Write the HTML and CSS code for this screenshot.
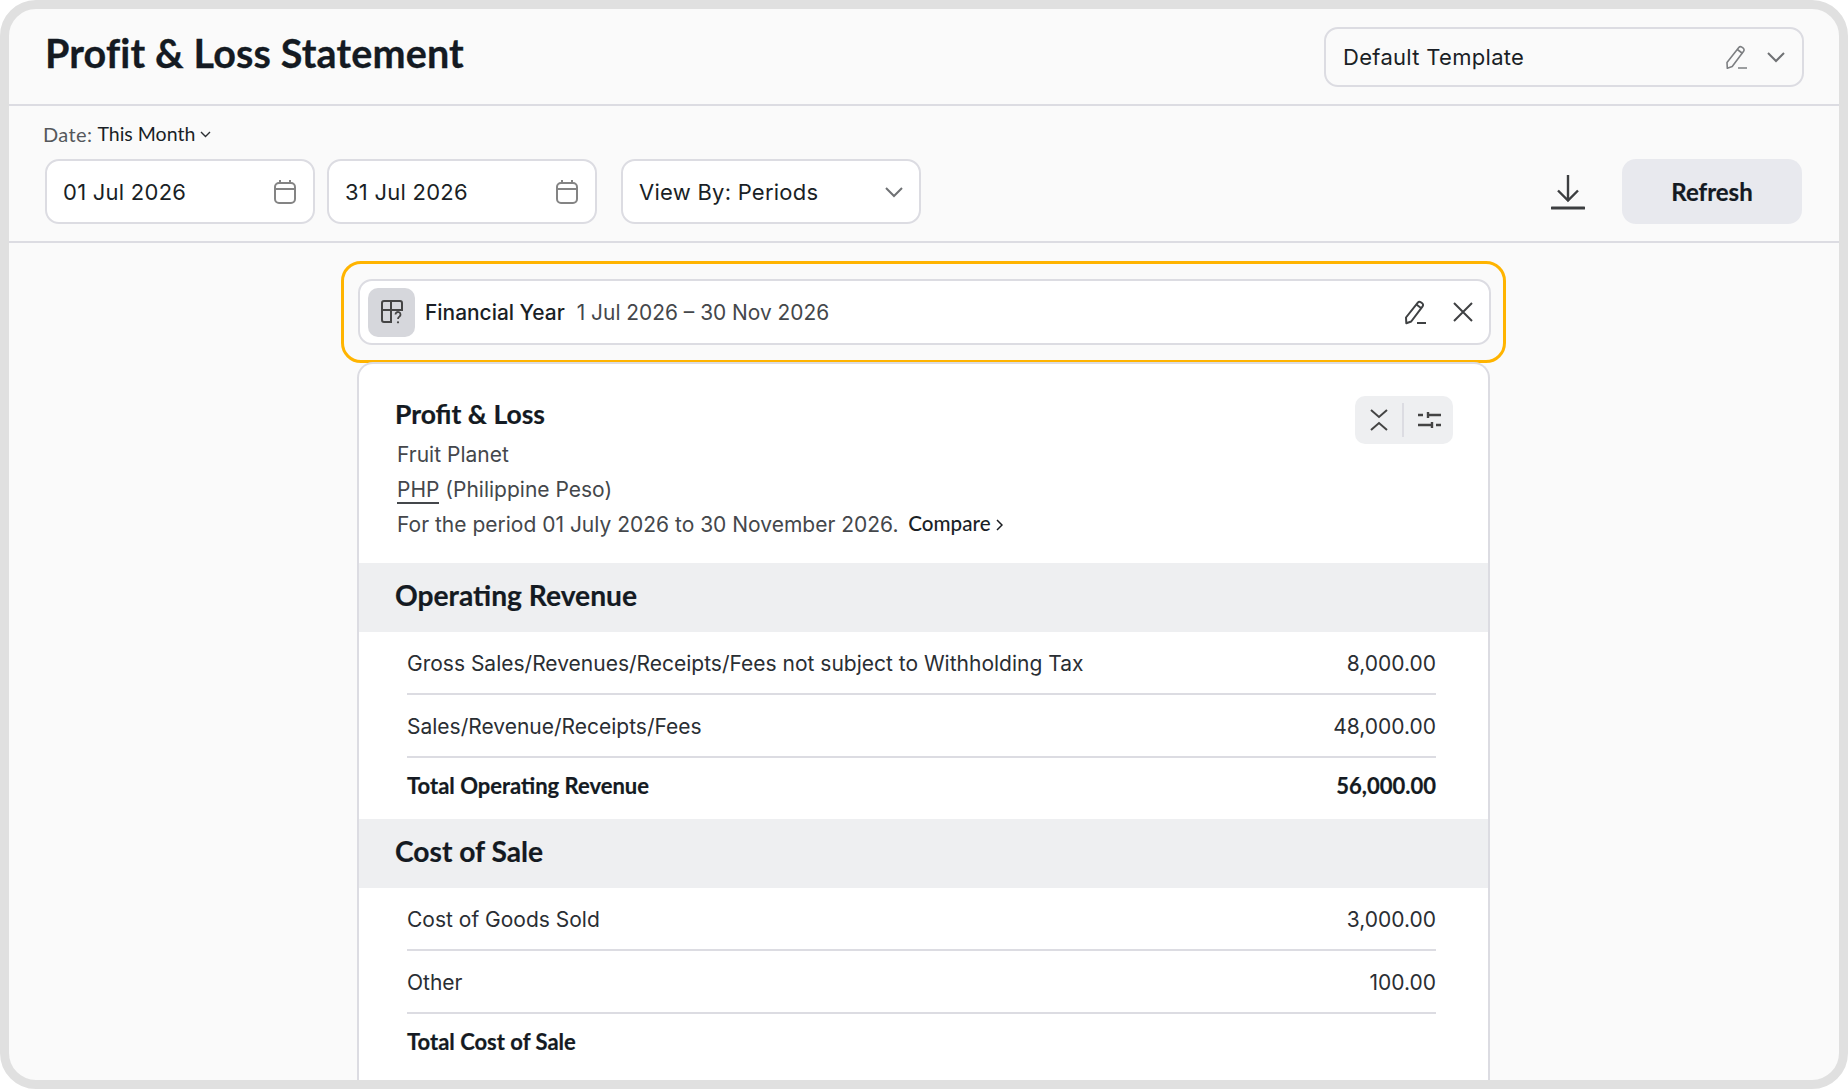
FILE: index.html
```html
<!DOCTYPE html>
<html lang="en">
<head>
    <meta charset="UTF-8">
    <meta name="viewport" content="width=device-width, initial-scale=1.0">
    <title>Profit &amp; Loss Statement</title>
    <link rel="stylesheet" href="styles.css">
</head>
<body>

    <div class="frame">
        <div class="header">
            <h1>Profit &amp; Loss Statement</h1>
            <div class="template-select">
                <span>Default Template</span>
                <svg class="icon-pen" width="26" height="26" viewBox="0 0 26 26" fill="none" stroke="#7d7f82" stroke-width="1.6" stroke-linejoin="round"><path d="M3 18.5 14.8 3.6a2.2 2.2 0 0 1 3-.4l1.4 1a2.2 2.2 0 0 1 .4 3.1L8.200 22.500 3.300 24.200z"/><path d="M13.400 5.500l5.200 4"/><path d="M14 24h9"/></svg>
                <svg class="icon-chev" width="20" height="12" viewBox="0 0 20 12" fill="none" stroke="#6f7174" stroke-width="2"><path d="M2 2l8 8 8-8"/></svg>
            </div>
        </div>

        <div class="toolbar">
            <div class="date-label">Date: <span class="date-value">This Month</span>
                <svg width="11" height="7" viewBox="0 0 11 7" fill="none" stroke="#2b2f33" stroke-width="1.400"><path d="M1 1l4.500 4.500L10 1"/></svg>
            </div>
            <div class="toolbar-row">
                <div class="field date-field">
                    <span>01 Jul 2026</span>
                    <svg width="24" height="26" viewBox="0 0 24 26" fill="none" stroke="#848484" stroke-width="2"><rect x="2" y="4" width="20" height="20" rx="4"/><path d="M2 10h20M7 1v4M17 1v4"/></svg>
                </div>
                <div class="field date-field">
                    <span>31 Jul 2026</span>
                    <svg width="24" height="26" viewBox="0 0 24 26" fill="none" stroke="#848484" stroke-width="2"><rect x="2" y="4" width="20" height="20" rx="4"/><path d="M2 10h20M7 1v4M17 1v4"/></svg>
                </div>
                <div class="field view-field">
                    <span>View By: Periods</span>
                    <svg width="20" height="12" viewBox="0 0 20 12" fill="none" stroke="#6f7174" stroke-width="2"><path d="M2 2l8 8 8-8"/></svg>
                </div>
                <svg class="download" width="34" height="36" viewBox="0 0 34 36" fill="none" stroke="#3c3e40"><path d="M17 1v25M7 16.500l10 10 10-10" stroke-width="2.400"/><path d="M1 34h32" stroke-width="3" stroke-linecap="round"/></svg>
                <button class="refresh">Refresh</button>
            </div>
        </div>

        <div class="main">
            <div class="highlight">
                <div class="fy-bar">
                    <div class="fy-icon">
                        <svg width="24" height="26" viewBox="0 0 24 26" fill="none" stroke="#444" stroke-width="2"><path d="M12 23H4a2 2 0 0 1-2-2V4a2 2 0 0 1 2-2h16a2 2 0 0 1 2 2v7H2M11 2v21"/><path d="M15.500 15.500a2.500 2.500 0 1 1 4 2c-1 .7-1.500 1.200-1.500 2.500" stroke-width="1.800"/><circle cx="18" cy="23.300" r="1.100" fill="#444" stroke="none"/></svg>
                    </div>
                    <span class="fy-name">Financial Year</span>
                    <span class="fy-dates">1 Jul 2026 – 30 Nov 2026</span>
                    <div class="fy-actions">
                        <svg width="26" height="26" viewBox="0 0 26 26" fill="none" stroke="#3f4143" stroke-width="2" stroke-linejoin="round"><path d="M3 18.500 14.800 3.600a2.200 2.200 0 0 1 3-.4l1.400 1a2.200 2.200 0 0 1 .4 3.100L8.200 22.500 3.300 24.200z"/><path d="M13.400 5.500l5.200 4"/><path d="M14 24h9"/></svg>
                        <svg width="22" height="22" viewBox="0 0 22 22" fill="none" stroke="#3f4143" stroke-width="2"><path d="M2 2l18 18M20 2 2 20"/></svg>
                    </div>
                </div>
            </div>

            <div class="report">
                <div class="report-head">
                    <div>
                        <h2>Profit &amp; Loss</h2>
                        <p>Fruit Planet</p>
                        <p><span class="currency">PHP</span> (Philippine Peso)</p>
                        <p>For the period 01 July 2026 to 30 November 2026. <a class="compare">Compare
                            <svg width="7" height="12" viewBox="0 0 7 12" fill="none" stroke="#1a1d21" stroke-width="1.500"><path d="M1 1l5 5-5 5"/></svg></a></p>
                    </div>
                    <div class="report-tools">
                        <svg width="18" height="22" viewBox="0 0 18 22" fill="none" stroke="#444" stroke-width="2"><path d="M1 1l8 7 8-7M1 21l8-7 8 7"/></svg>
                        <span class="tool-sep"></span>
                        <svg width="24" height="18" viewBox="0 0 24 18" fill="none" stroke="#444" stroke-width="2.400"><path d="M1 4h5M11 4h13M11 1v6M1 14h13M19 14h5M15 11v6"/></svg>
                    </div>
                </div>

                <div class="section-title">Operating Revenue</div>
                <div class="rows">
                    <div class="row"><span>Gross Sales/Revenues/Receipts/Fees not subject to Withholding Tax</span><span>8,000.00</span></div>
                    <div class="row"><span>Sales/Revenue/Receipts/Fees</span><span>48,000.00</span></div>
                    <div class="row total"><span>Total Operating Revenue</span><span>56,000.00</span></div>
                </div>

                <div class="section-title">Cost of Sale</div>
                <div class="rows">
                    <div class="row"><span>Cost of Goods Sold</span><span>3,000.00</span></div>
                    <div class="row"><span>Other</span><span>100.00</span></div>
                    <div class="row total"><span>Total Cost of Sale</span></div>
                </div>
            </div>
        </div>
    </div>

</body>
</html>
```

FILE: styles.css
```css
* {
    box-sizing: border-box;
}
body {
    font-family: Inter, "Liberation Sans", sans-serif;
    background-color: white;
    color: #1a1f26;
    margin: 0;
    padding: 0;
    overflow: hidden;
}
h1, h2, p {
    margin: 0;
}
.frame {
    height: 100vh;
    border: 9px solid #e0e0e0;
    border-radius: 36px;
    background-color: #fafafa;
    overflow: hidden;
    display: flex;
    flex-direction: column;
}
.header {
    height: 97px;
    flex: none;
    display: flex;
    align-items: flex-start;
    justify-content: space-between;
    padding: 18px 35px 0 36px;
    border-bottom: 2px solid #dcdce2;
}
.header h1 {
    font-family: Lato, sans-serif;
    font-size: 39.500px;
    font-weight: 700;
    line-height: 46px;
    letter-spacing: 0.150px;
    color: #141a22;
    margin-top: 3px;
    -webkit-text-stroke: 0.300px #141a22;
}
.template-select {
    width: 480px;
    height: 60px;
    display: flex;
    align-items: center;
    padding: 0 16px 0 17px;
    border: 2px solid #dcdce2;
    border-radius: 14px;
    font-size: 22px;
    letter-spacing: 0.3px;
}
.template-select span {
    flex: 1;
}
.icon-pen {
    margin-right: 16px;
}
.toolbar {
    height: 137px;
    flex: none;
    padding: 16px 37px 0 34px;
    border-bottom: 2px solid #dcdce2;
}
.date-label {
    display: flex;
    align-items: center;
    gap: 5px;
    font-family: Lato, sans-serif;
    font-size: 20px;
    letter-spacing: 0.400px;
    line-height: 24px;
    color: #55585c;
}
.date-value {
    color: #1a1f26;
    font-size: 19.500px;
    letter-spacing: 0;
}
.toolbar-row {
    display: flex;
    align-items: center;
    margin-top: 13px;
    padding-left: 2px;
}
.field {
    height: 65px;
    display: flex;
    align-items: center;
    justify-content: space-between;
    background-color: white;
    border: 2px solid #dcdce2;
    border-radius: 14px;
    padding: 0 16px;
    font-size: 22px;
    letter-spacing: 0.250px;
}
.date-field {
    width: 270px;
    margin-right: 12px;
}
.view-field {
    width: 300px;
    margin-left: 12px;
    padding-right: 15px;
}
.download {
    margin-left: auto;
    margin-right: 37px;
}
.refresh {
    width: 180px;
    height: 65px;
    border: none;
    border-radius: 14px;
    background-color: #e8e9ee;
    color: #141a22;
    font-family: Lato, sans-serif;
    font-size: 24px;
    font-weight: 700;
    -webkit-text-stroke: 0.200px #141a22;
}
.main {
    flex: 1;
    width: 1165px;
    margin-left: 332px;
    margin-top: 18px;
}
.highlight {
    height: 102px;
    border: 3px solid #ffb400;
    border-radius: 20px;
    padding: 15px 14px;
}
.fy-bar {
    height: 66px;
    width: 1133px;
    display: flex;
    align-items: center;
    padding: 0 15px 0 8px;
    background-color: white;
    border: 2px solid #dcdce2;
    border-radius: 14px;
    font-size: 20.900px;
}
.fy-icon {
    width: 47px;
    height: 49px;
    display: flex;
    align-items: center;
    justify-content: center;
    background-color: #d6d7dc;
    border-radius: 10px;
    margin-right: 10px;
}
.fy-name {
    font-weight: 500;
    margin-right: 12px;
}
.fy-dates {
    color: #44474b;
}
.fy-actions {
    margin-left: auto;
    display: flex;
    align-items: center;
    gap: 23px;
}
.report {
    width: 1133px;
    height: 800px;
    margin-left: 16px;
    margin-top: -1px;
    background-color: white;
    border: 2px solid #dcdce2;
    border-bottom: none;
    border-radius: 16px 16px 0 0;
}
.report-head {
    height: 199px;
    display: flex;
    justify-content: space-between;
    padding: 32px 35px 0 36px;
}
.report-head h2 {
    font-family: Lato, sans-serif;
    font-size: 26.500px;
    font-weight: 700;
    line-height: 36px;
    color: #141a22;
    margin-bottom: 6px;
    -webkit-text-stroke: 0.200px #141a22;
}
.report-head p {
    font-size: 21px;
    line-height: 34.500px;
    color: #44474b;
    margin-left: 2px;
}
.currency {
    border-bottom: 2px solid #44474b;
}
.compare {
    margin-left: 4px;
    font-family: Lato, sans-serif;
    font-size: 20.600px;
    font-weight: 500;
    color: #1a1f26;
    position: relative;
    top: -1px;
}
.report-tools {
    width: 98px;
    height: 48px;
    display: flex;
    align-items: center;
    justify-content: space-between;
    padding: 0 12px 0 15px;
    background-color: #eeeff1;
    border-radius: 10px;
}
.tool-sep {
    width: 2px;
    height: 34px;
    background-color: #dcdce2;
}
.section-title {
    height: 69px;
    display: flex;
    align-items: center;
    padding: 0 0 6px 36px;
    background-color: #eeeff1;
    font-family: Lato, sans-serif;
    font-size: 28.200px;
    font-weight: 700;
    color: #141a22;
    -webkit-text-stroke: 0.200px #141a22;
}
.rows {
    padding: 0 52px 0 48px;
}
.row {
    height: 63px;
    display: flex;
    align-items: center;
    justify-content: space-between;
    padding-top: 1px;
    border-bottom: 2px solid #dcdce2;
    font-size: 21px;
    color: #2a2e33;
}
.row.total {
    height: 61px;
    padding: 0 0 7px;
    border-bottom: none;
    font-family: Lato, sans-serif;
    font-size: 22px;
    font-weight: 700;
    color: #141a22;
    -webkit-text-stroke: 0.200px #141a22;
}
```
